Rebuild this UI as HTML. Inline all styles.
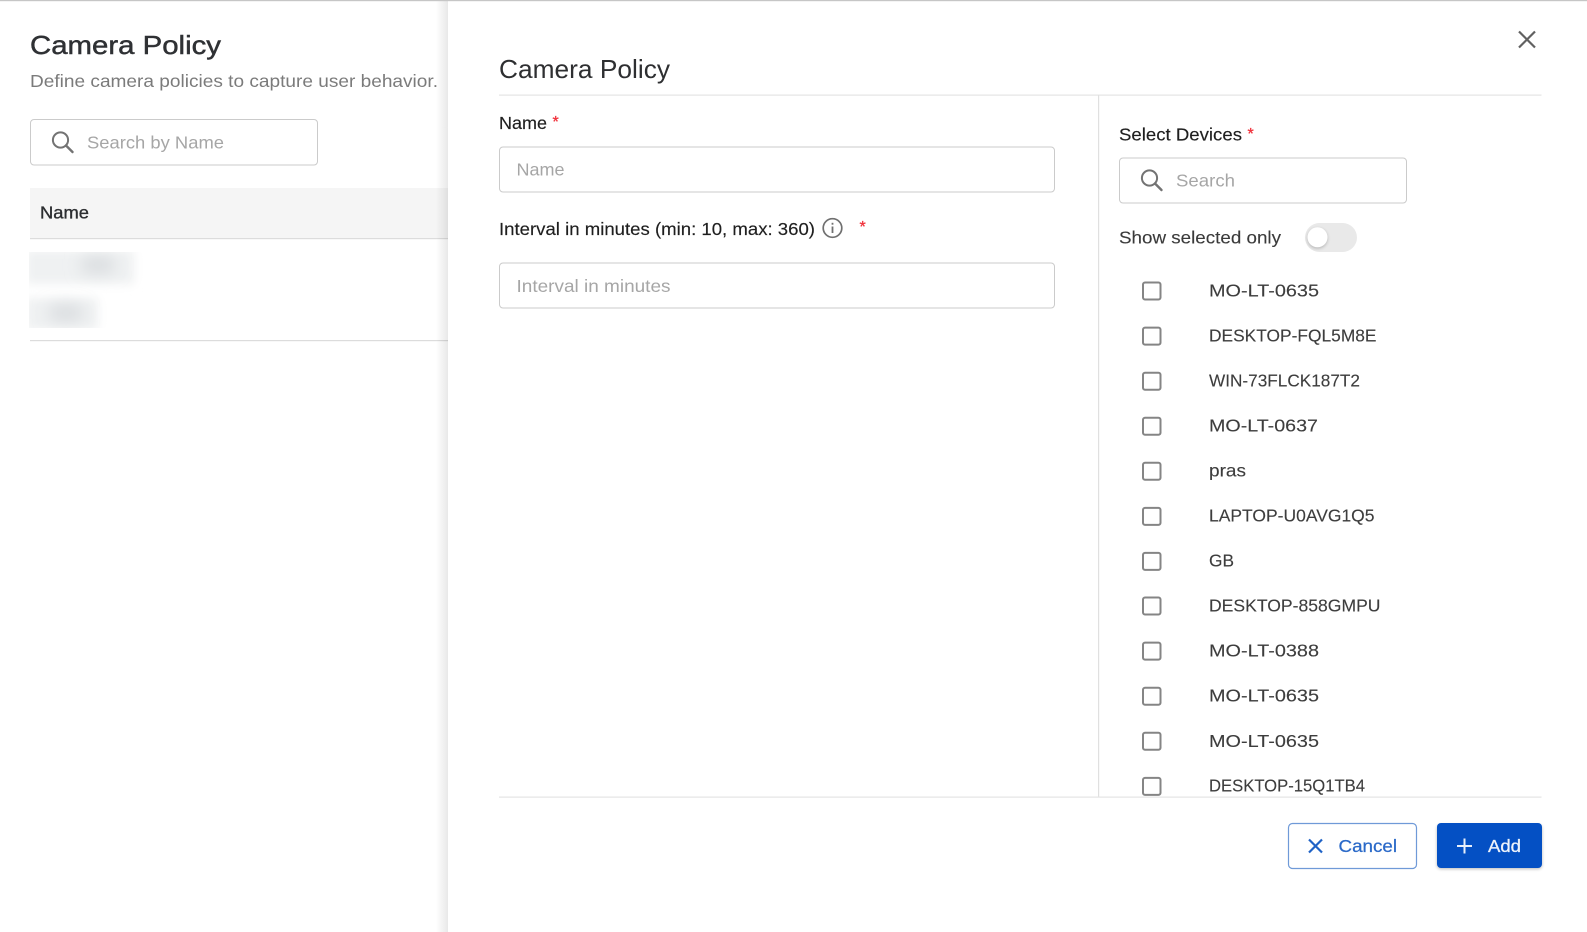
<!DOCTYPE html>
<html lang="en">
<head>
<meta charset="utf-8">
<title>Camera Policy</title>
<style>
html,body{margin:0;padding:0;background:#fff;width:1587px;height:932px;overflow:hidden}
svg{display:block;position:absolute;left:0;top:0;filter:blur(.35px)}
text{font-family:"Liberation Sans",sans-serif;font-size:17.5px}
.ph{fill:#a6a6a6}
.lab{fill:#1f1f1f;stroke:#1f1f1f;stroke-width:.15px}
.dev{fill:#3d3d3d;stroke:#3d3d3d;stroke-width:.12px}
.star{fill:#f0323c;stroke:#f0323c;stroke-width:.3px;font-size:16px}
</style>
</head>
<body>
<svg width="1587" height="932" viewBox="0 0 1587 932" xmlns="http://www.w3.org/2000/svg">
<defs>
<linearGradient id="sh" x1="0" x2="1" y1="0" y2="0"><stop offset="0" stop-color="#000" stop-opacity="0"/><stop offset="1" stop-color="#000" stop-opacity=".09"/></linearGradient>
<filter id="b1" filterUnits="userSpaceOnUse" x="0" y="230" width="200" height="120"><feGaussianBlur stdDeviation="5"/></filter>
<filter id="b2" filterUnits="userSpaceOnUse" x="0" y="230" width="200" height="120"><feGaussianBlur stdDeviation="8"/></filter>
<filter id="s1" x="-20%" y="-30%" width="140%" height="170%"><feGaussianBlur stdDeviation="1.5"/></filter>
<clipPath id="list"><rect x="1100" y="96" width="442" height="701"/></clipPath>
<clipPath id="rows"><rect x="29" y="252" width="125" height="76"/></clipPath>
</defs>
<rect width="1587" height="932" fill="#fff"/>

<!-- left page -->
<text x="30" y="54" style="font-size:26px;stroke:#2f3134;stroke-width:.45px" fill="#2f3134" textLength="191" lengthAdjust="spacingAndGlyphs">Camera Policy</text>
<text x="30" y="87" style="font-size:17.5px" fill="#7b7b7b" textLength="408" lengthAdjust="spacingAndGlyphs">Define camera policies to capture user behavior.</text>
<rect x="30.5" y="119.5" width="287" height="45.5" rx="3.5" fill="#fff" stroke="#cbcbcb"/>
<circle cx="60.500" cy="140" r="7.600" fill="none" stroke="#737373" stroke-width="2"/>
<path d="M66 145.500L72.500 152" stroke="#737373" stroke-width="2.400" stroke-linecap="round"/>
<text x="87" y="148.500" class="ph" textLength="137" lengthAdjust="spacingAndGlyphs">Search by Name</text>
<rect x="30" y="188" width="418" height="50" fill="#f5f5f5"/>
<rect x="30" y="238" width="418" height="1.2" fill="#dcdcdc"/>
<text x="40" y="218.500" fill="#2c2e31" style="stroke:#2c2e31;stroke-width:.35px" textLength="49" lengthAdjust="spacingAndGlyphs">Name</text>
<g clip-path="url(#rows)">
<rect x="26" y="250" width="108" height="34" fill="#eff1f2" filter="url(#b1)"/>
<rect x="26" y="298" width="72" height="32" fill="#eff1f2" filter="url(#b1)"/>
<rect x="82" y="258" width="32" height="14" fill="#d6d9dc" filter="url(#b2)"/>
<rect x="50" y="306" width="32" height="14" fill="#d6d9dc" filter="url(#b2)"/>
</g>
<rect x="30" y="340" width="418" height="1.2" fill="#dcdcdc"/>

<!-- drawer shadow -->
<rect x="436" y="0" width="12" height="932" fill="url(#sh)"/>
<rect x="448" y="0" width="1139" height="932" fill="#fff"/>
<rect x="0" y="0" width="1587" height="1.2" fill="#c6c6c6"/>

<!-- drawer header -->
<text x="499" y="78" style="font-size:26px" fill="#2e2f31" textLength="171" lengthAdjust="spacingAndGlyphs">Camera Policy</text>
<path d="M1519 31.500L1535 47.500M1535 31.500L1519 47.500" stroke="#616161" stroke-width="2.200" fill="none"/>
<rect x="499" y="94.500" width="1042.500" height="1.200" fill="#e4e4e4"/>

<!-- form -->
<text x="499" y="129" class="lab" textLength="48" lengthAdjust="spacingAndGlyphs">Name</text>
<text x="552.500" y="127" class="star">*</text>
<rect x="499.500" y="147" width="555" height="45" rx="3.500" fill="#fff" stroke="#cbcbcb"/>
<text x="516.500" y="175.500" class="ph" textLength="48" lengthAdjust="spacingAndGlyphs">Name</text>
<text x="499" y="235" class="lab" textLength="316" lengthAdjust="spacingAndGlyphs">Interval in minutes (min: 10, max: 360)</text>
<circle cx="832.500" cy="228" r="9.300" fill="none" stroke="#707070" stroke-width="1.700"/>
<rect x="831.600" y="226.500" width="1.800" height="6.500" fill="#707070"/>
<rect x="831.600" y="222.800" width="1.800" height="1.900" fill="#707070"/>
<text x="859.500" y="232" class="star">*</text>
<rect x="499.500" y="263" width="555" height="45" rx="3.500" fill="#fff" stroke="#cbcbcb"/>
<text x="516.500" y="292" class="ph" textLength="154" lengthAdjust="spacingAndGlyphs">Interval in minutes</text>

<!-- divider -->
<rect x="1098" y="95" width="1.200" height="702" fill="#e0e0e0"/>

<!-- device column -->
<text x="1119" y="140.500" class="lab" textLength="123" lengthAdjust="spacingAndGlyphs">Select Devices</text>
<text x="1247.500" y="139" class="star">*</text>
<rect x="1119.500" y="158" width="287" height="45" rx="3.500" fill="#fff" stroke="#cbcbcb"/>
<circle cx="1149.500" cy="178" r="7.600" fill="none" stroke="#737373" stroke-width="2"/>
<path d="M1155 183.500L1161.500 190" stroke="#737373" stroke-width="2.400" stroke-linecap="round"/>
<text x="1176" y="186.500" class="ph" textLength="59" lengthAdjust="spacingAndGlyphs">Search</text>
<text x="1119" y="243.500" fill="#3a3a3a" style="stroke:#3a3a3a;stroke-width:.12px" textLength="162" lengthAdjust="spacingAndGlyphs">Show selected only</text>
<rect x="1305" y="223" width="52" height="29" rx="14.500" fill="#e9e9e9"/>
<circle cx="1317.500" cy="238.500" r="10" fill="#000" opacity=".22" filter="url(#s1)"/>
<circle cx="1317.500" cy="237.300" r="10" fill="#fff"/>

<g clip-path="url(#list)">
<g fill="#fff" stroke="#858585" stroke-width="2">
<rect x="1143" y="282.500" width="17.500" height="17" rx="2"/>
<rect x="1143" y="327.600" width="17.500" height="17" rx="2"/>
<rect x="1143" y="372.700" width="17.500" height="17" rx="2"/>
<rect x="1143" y="417.800" width="17.500" height="17" rx="2"/>
<rect x="1143" y="462.800" width="17.500" height="17" rx="2"/>
<rect x="1143" y="507.900" width="17.500" height="17" rx="2"/>
<rect x="1143" y="552.900" width="17.500" height="17" rx="2"/>
<rect x="1143" y="597.500" width="17.500" height="17" rx="2"/>
<rect x="1143" y="642.600" width="17.500" height="17" rx="2"/>
<rect x="1143" y="687.700" width="17.500" height="17" rx="2"/>
<rect x="1143" y="732.800" width="17.500" height="17" rx="2"/>
<rect x="1143" y="777.900" width="17.500" height="17" rx="2"/>
</g>
<text class="dev" x="1209" y="296.300" textLength="110" lengthAdjust="spacingAndGlyphs">MO-LT-0635</text>
<text class="dev" x="1209" y="341.300" textLength="167.500" lengthAdjust="spacingAndGlyphs">DESKTOP-FQL5M8E</text>
<text class="dev" x="1209" y="386.400" textLength="151" lengthAdjust="spacingAndGlyphs">WIN-73FLCK187T2</text>
<text class="dev" x="1209" y="431.400" textLength="109" lengthAdjust="spacingAndGlyphs">MO-LT-0637</text>
<text class="dev" x="1209" y="476.500" textLength="37" lengthAdjust="spacingAndGlyphs">pras</text>
<text class="dev" x="1209" y="521.500" textLength="165.500" lengthAdjust="spacingAndGlyphs">LAPTOP-U0AVG1Q5</text>
<text class="dev" x="1209" y="566.600" textLength="25" lengthAdjust="spacingAndGlyphs">GB</text>
<text class="dev" x="1209" y="611.600" textLength="171.500" lengthAdjust="spacingAndGlyphs">DESKTOP-858GMPU</text>
<text class="dev" x="1209" y="656.700" textLength="110" lengthAdjust="spacingAndGlyphs">MO-LT-0388</text>
<text class="dev" x="1209" y="701.700" textLength="110" lengthAdjust="spacingAndGlyphs">MO-LT-0635</text>
<text class="dev" x="1209" y="746.800" textLength="110" lengthAdjust="spacingAndGlyphs">MO-LT-0635</text>
<text class="dev" x="1209" y="791.500" textLength="156" lengthAdjust="spacingAndGlyphs">DESKTOP-15Q1TB4</text>
</g>

<rect x="499" y="796.500" width="1042.500" height="1.200" fill="#e4e4e4"/>

<!-- footer buttons -->
<rect x="1288.500" y="823.500" width="128" height="45" rx="4" fill="#fff" stroke="#6f9ad8" stroke-width="1.200"/>
<path d="M1309 839.500L1322 852.500M1322 839.500L1309 852.500" stroke="#1f62c6" stroke-width="2.200" fill="none"/>
<text x="1338.500" y="852" fill="#2a69c8" style="stroke:#2a69c8;stroke-width:.25px" textLength="58.500" lengthAdjust="spacingAndGlyphs">Cancel</text>
<rect x="1437" y="825" width="105" height="44" rx="4" fill="#000" opacity=".28" filter="url(#s1)"/>
<rect x="1437" y="823" width="105" height="45" rx="4" fill="#0450c4"/>
<path d="M1464.500 838.500V853.500M1457 846H1472" stroke="#e8effa" stroke-width="2" fill="none"/>
<text x="1488" y="852" fill="#eef3fb" style="stroke:#eef3fb;stroke-width:.3px" textLength="33" lengthAdjust="spacingAndGlyphs">Add</text>
</svg>
</body>
</html>
